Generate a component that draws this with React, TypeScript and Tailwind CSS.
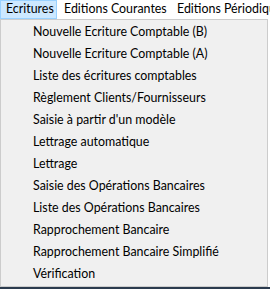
const items = [
  'Nouvelle Ecriture Comptable (B)',
  'Nouvelle Ecriture Comptable (A)',
  'Liste des écritures comptables',
  'Règlement Clients/Fournisseurs',
  "Saisie à partir d'un modèle",
  'Lettrage automatique',
  'Lettrage',
  'Saisie des Opérations Bancaires',
  'Liste des Opérations Bancaires',
  'Rapprochement Bancaire',
  'Rapprochement Bancaire Simplifié',
  'Vérification',
];

export default function App() {
  return (
    <div className="w-[270px] h-[289px] bg-white overflow-hidden flex flex-col text-[12.4px] text-black [font-family:'Lato','Noto_Sans',sans-serif]">
      {/* barre de menus */}
      <div className="h-[19px] flex items-stretch whitespace-nowrap">
        <div className="w-[57px] shrink-0 pl-[5px] flex items-center bg-[#cce8ff] border border-[#99d1ff]">Ecritures</div>
        <div className="w-[120px] shrink-0 pl-[7px] flex items-center">Editions Courantes</div>
        <div className="shrink-0 flex items-center">Editions Périodiques</div>
      </div>

      {/* menu déroulant */}
      <div className="w-[268px] flex-1 bg-[#f0f0f0] border border-[#cccccc] pt-[1px]">
        {items.map(label => (
          <div key={label} className="h-[22px] flex items-center pl-[32px] whitespace-nowrap">
            {label}
          </div>
        ))}
      </div>
      <div className="h-[2px] bg-[#2b3b4e]" />
    </div>
  );
}
